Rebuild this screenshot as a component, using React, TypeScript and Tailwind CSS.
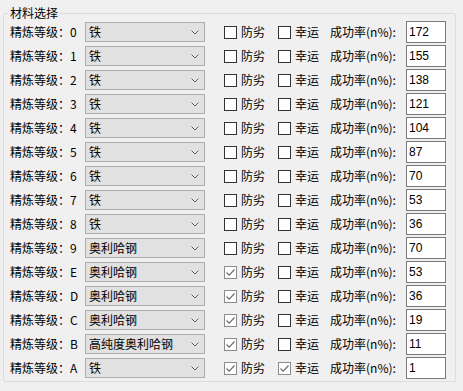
type Row = {
  level: string;
  material: string;
  rate: string;
  fangLie: boolean;
  xingYun: boolean;
};

const rows: Row[] = [
  { level: "0", material: "铁", rate: "172", fangLie: false, xingYun: false },
  { level: "1", material: "铁", rate: "155", fangLie: false, xingYun: false },
  { level: "2", material: "铁", rate: "138", fangLie: false, xingYun: false },
  { level: "3", material: "铁", rate: "121", fangLie: false, xingYun: false },
  { level: "4", material: "铁", rate: "104", fangLie: false, xingYun: false },
  { level: "5", material: "铁", rate: "87", fangLie: false, xingYun: false },
  { level: "6", material: "铁", rate: "70", fangLie: false, xingYun: false },
  { level: "7", material: "铁", rate: "53", fangLie: false, xingYun: false },
  { level: "8", material: "铁", rate: "36", fangLie: false, xingYun: false },
  { level: "9", material: "奥利哈钢", rate: "70", fangLie: false, xingYun: false },
  { level: "E", material: "奥利哈钢", rate: "53", fangLie: true, xingYun: false },
  { level: "D", material: "奥利哈钢", rate: "36", fangLie: true, xingYun: false },
  { level: "C", material: "奥利哈钢", rate: "19", fangLie: true, xingYun: false },
  { level: "B", material: "高纯度奥利哈钢", rate: "11", fangLie: true, xingYun: false },
  { level: "A", material: "铁", rate: "1", fangLie: true, xingYun: true },
];

function Check({ checked }: { checked: boolean }) {
  if (!checked) {
    return <div className="w-[13px] h-[13px] border border-[#333333] bg-white shrink-0" />;
  }
  return (
    <div className="w-[13px] h-[13px] border border-[#8c8c8c] bg-white shrink-0 flex items-center justify-center">
      <svg width="11" height="11" viewBox="0 0 11 11">
        <polyline points="1.5,5.5 4.2,8.2 9.5,2.5" fill="none" stroke="#6e6e6e" strokeWidth="1.2" />
      </svg>
    </div>
  );
}

function Combo({ value }: { value: string }) {
  return (
    <div className="w-[120px] h-[20px] border border-[#adadad] bg-[#e1e1e1] flex items-center justify-between pl-[3px] pr-[5px] shrink-0">
      <span>{value}</span>
      <svg width="8" height="5" viewBox="0 0 8 5">
        <polyline points="0.5,0.5 4,4 7.5,0.5" fill="none" stroke="#606060" strokeWidth="1" />
      </svg>
    </div>
  );
}

export default function App() {
  return (
    <div
      className="w-[463px] h-[391px] bg-[#f0f0f0] pl-[3px] pt-[6px] text-[12px] text-black overflow-hidden"
      style={{ fontFamily: '"Noto Sans CJK SC", "Liberation Sans", sans-serif' }}
    >
      <fieldset className="w-[453px] h-[376px] border border-[#dcdcdc] rounded-[2px]">
        <legend className="ml-[4px] px-[2px] leading-[14px]">材料选择</legend>
        <div className="pl-[6px] flex flex-col">
          {rows.map((r) => (
            <div key={r.level} className="h-[24px] flex items-center">
              <div className="w-[75px] shrink-0 leading-none">
                精炼等级：{r.level}
              </div>
              <Combo value={r.material} />
              <div className="ml-[19px] w-[54px] flex items-center gap-[4px] shrink-0">
                <Check checked={r.fangLie} />
                <span>防劣</span>
              </div>
              <div className="w-[52px] flex items-center gap-[4px] shrink-0">
                <Check checked={r.xingYun} />
                <span>幸运</span>
              </div>
              <div className="w-[76px] shrink-0">成功率(n%):</div>
              <div
                className="w-[40px] h-[22px] -mt-[1px] border border-[#7a7a7a] bg-white pl-[2px] flex items-center shrink-0"
                style={{ fontFamily: '"Liberation Sans", sans-serif' }}
              >
                {r.rate}
              </div>
            </div>
          ))}
        </div>
      </fieldset>
    </div>
  );
}
